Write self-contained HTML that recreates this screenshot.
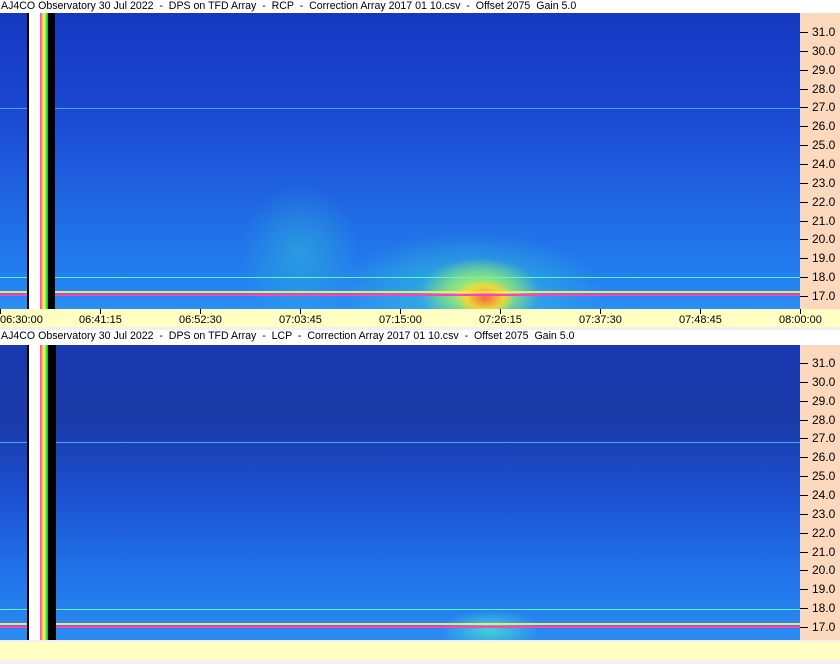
<html><head><style>
body{margin:0;width:840px;height:664px;background:#f0f0f0;position:relative;overflow:hidden;font-family:"Liberation Sans",sans-serif;font-size:12px;color:#000}
.t{position:absolute;left:0;width:840px;height:13px;background:#fff;line-height:13px;white-space:pre;padding-left:1px;font-size:10.6px}
.sp{position:absolute;left:0;width:800px;overflow:hidden}
.ax{position:absolute;left:800px;width:40px;background:#fcd9bd}
.lab{position:absolute;left:812px;font-size:12px;line-height:12px}
.tk{position:absolute;left:800px;width:8px;height:1px;background:#000}
.st{position:absolute;top:0;bottom:0}
.yl{position:absolute;left:0;width:840px;background:#ffffc4}
.tl{position:absolute;font-size:11px}
.vt{position:absolute;width:1px;height:5px;background:#000}
.hl{position:absolute;left:0;width:800px;height:1px}
</style></head><body>
<div class="t" style="top:0">AJ4CO Observatory 30 Jul 2022  -  DPS on TFD Array  -  RCP  -  Correction Array 2017 01 10.csv  -  Offset 2075  Gain 5.0</div>
<div class="sp" style="top:13px;height:296px;background:
radial-gradient(ellipse 30px 18px at 485px 285px,rgba(255,90,60,.9),rgba(255,210,40,.8) 60%,transparent 100%),
radial-gradient(ellipse 60px 35px at 480px 280px,rgba(230,255,60,.9),rgba(180,255,80,.5) 60%,transparent),
radial-gradient(ellipse 130px 55px at 470px 275px,rgba(60,220,200,.6),transparent),
radial-gradient(ellipse 60px 70px at 300px 240px,rgba(50,200,210,.45),transparent),
linear-gradient(#1638c0,#1a46d0 30%,#1f62e0 60%,#2380f0 90%,#2a90f4)">
<div class="hl" style="top:95px;background:#4aa0ff"></div>
<div class="hl" style="top:264px;background:#50ffd0"></div>
<div class="hl" style="top:278px;height:2px;background:#ffe060"></div>
<div class="hl" style="top:281px;height:2px;background:#ff40c0"></div>
<div class="st" style="left:27px;width:2px;background:#000"></div>
<div class="st" style="left:29px;width:11px;background:#fff"></div>
<div class="st" style="left:40px;width:8px;background:linear-gradient(90deg,#ff30ff,#ffa040,#ffff40,#40ff60,#20a040)"></div>
<div class="st" style="left:48px;width:7px;background:#000"></div>
</div>
<div class="ax" style="top:13px;height:296px"></div>
<div class="yl" style="top:309px;height:18px"></div>
<div class="t" style="top:330px;height:15px">AJ4CO Observatory 30 Jul 2022  -  DPS on TFD Array  -  LCP  -  Correction Array 2017 01 10.csv  -  Offset 2075  Gain 5.0</div>
<div class="sp" style="top:345px;height:295px;background:
radial-gradient(ellipse 50px 20px at 490px 285px,rgba(80,240,200,.7),transparent),
linear-gradient(#1a38b0,#1a3aa8 25%,#1c50d0 50%,#2070e8 75%,#2a8cf2)">
<div class="hl" style="top:97px;background:#4aa0ff"></div>
<div class="hl" style="top:264px;background:#50ffd0"></div>
<div class="hl" style="top:278px;height:2px;background:#ffe060"></div>
<div class="hl" style="top:281px;height:2px;background:#ff40c0"></div>
<div class="st" style="left:27px;width:2px;background:#000"></div>
<div class="st" style="left:29px;width:11px;background:#fff"></div>
<div class="st" style="left:40px;width:8px;background:linear-gradient(90deg,#ff30ff,#ffa040,#ffff40,#40ff60,#20a040)"></div>
<div class="st" style="left:48px;width:8px;background:#000"></div>
</div>
<div class="ax" style="top:345px;height:295px"></div>
<div class="yl" style="top:642px;height:18px"></div>
<div id="a"></div>
<script>
var h='';var v=['31.0','30.0','29.0','28.0','27.0','26.0','25.0','24.0','23.0','22.0','21.0','20.0','19.0','18.0','17.0'];
for(var i=0;i<15;i++){var y1=32+i*18.86,y2=363+i*18.86;
h+='<div class="tk" style="top:'+y1+'px"></div><div class="lab" style="top:'+(y1-6)+'px">'+v[i]+'</div>';
h+='<div class="tk" style="top:'+y2+'px"></div><div class="lab" style="top:'+(y2-6)+'px">'+v[i]+'</div>';}
var t=['06:30:00','06:41:15','06:52:30','07:03:45','07:15:00','07:26:15','07:37:30','07:48:45','08:00:00'];
for(var j=0;j<9;j++){var x=j*100;h+='<div class="vt" style="left:'+x+'px;top:309px"></div>';
var l=j==0?0:x-21;h+='<div class="tl" style="left:'+l+'px;top:314px">'+t[j]+'</div>';}
document.getElementById('a').innerHTML=h;
</script>
</body></html>
